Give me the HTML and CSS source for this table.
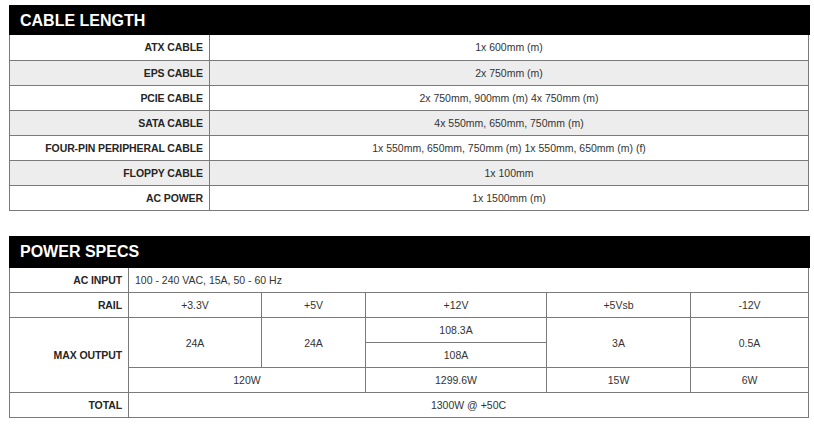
FILE: index.html
```html
<!DOCTYPE html>
<html>
<head>
<meta charset="utf-8">
<link rel="stylesheet" href="styles.css">
</head>
<body>
<div class="page">
  <section class="spec">
    <h2 class="spec-title">CABLE LENGTH</h2>
    <table class="spec-table cable">
      <colgroup><col class="c-label"><col></colgroup>
      <tr><th>ATX CABLE</th><td>1x 600mm (m)</td></tr>
      <tr class="alt"><th>EPS CABLE</th><td>2x 750mm (m)</td></tr>
      <tr><th>PCIE CABLE</th><td>2x 750mm, 900mm (m) 4x 750mm (m)</td></tr>
      <tr class="alt"><th>SATA CABLE</th><td>4x 550mm, 650mm, 750mm (m)</td></tr>
      <tr><th>FOUR-PIN PERIPHERAL CABLE</th><td>1x 550mm, 650mm, 750mm (m) 1x 550mm, 650mm (m) (f)</td></tr>
      <tr class="alt"><th>FLOPPY CABLE</th><td>1x 100mm</td></tr>
      <tr><th>AC POWER</th><td>1x 1500mm (m)</td></tr>
    </table>
  </section>
  <section class="spec">
    <h2 class="spec-title tall">POWER SPECS</h2>
    <table class="spec-table power">
      <colgroup>
        <col class="p1"><col class="p2"><col class="p3"><col class="p4"><col class="p5"><col>
      </colgroup>
      <tr><th>AC INPUT</th><td colspan="5" class="left">100 - 240 VAC, 15A, 50 - 60 Hz</td></tr>
      <tr><th>RAIL</th><td>+3.3V</td><td>+5V</td><td>+12V</td><td>+5Vsb</td><td>-12V</td></tr>
      <tr><th rowspan="3">MAX OUTPUT</th><td rowspan="2">24A</td><td rowspan="2">24A</td><td>108.3A</td><td rowspan="2">3A</td><td rowspan="2">0.5A</td></tr>
      <tr><td>108A</td></tr>
      <tr><td colspan="2">120W</td><td>1299.6W</td><td>15W</td><td>6W</td></tr>
      <tr><th>TOTAL</th><td colspan="5">1300W @ +50C</td></tr>
    </table>
  </section>
</div>
</body>
</html>
```
FILE: styles.css
```css
html, body {
  margin: 0;
  padding: 0;
  background: #ffffff;
}
.page {
  padding: 5px 0 0 9px;
  width: 801px;
  display: flex;
  flex-direction: column;
  gap: 25px;
}
.spec-title {
  margin: 0;
  height: 30px;
  background: #000000;
  color: #ffffff;
  font-family: "Liberation Sans", Arial, sans-serif;
  font-weight: bold;
  font-size: 16px;
  line-height: 31px;
  padding-left: 11px;
}
.spec-title.tall {
  height: 32px;
  line-height: 32px;
}
.spec-table {
  width: 800px;
  border-collapse: collapse;
  table-layout: fixed;
  border: 1px solid #7a7a7a;
  border-top: none;
}
.spec-table tr {
  height: 25px;
}
.spec-table th,
.spec-table td {
  border: 1px solid #7a7a7a;
  padding: 0 5px;
  font-family: "Liberation Sans", Arial, sans-serif;
  font-size: 10.5px;
  vertical-align: middle;
}
.spec-table tr:first-child th,
.spec-table tr:first-child td {
  border-top: none;
}
.spec-table th {
  text-align: right;
  font-weight: bold;
  color: #262626;
  font-size: 10.5px;
  letter-spacing: -0.1px;
  padding-right: 6px;
}
.spec-table td {
  text-align: center;
  color: #333333;
}
.spec-table td.left {
  text-align: left;
  padding-left: 6px;
}
.cable .c-label { width: 200px; }
.cable tr.alt th,
.cable tr.alt td { background: #ededed; }
.power .p1 { width: 119px; }
.power .p2 { width: 133px; }
.power .p3 { width: 104px; }
.power .p4 { width: 181px; }
.power .p5 { width: 144px; }
```
